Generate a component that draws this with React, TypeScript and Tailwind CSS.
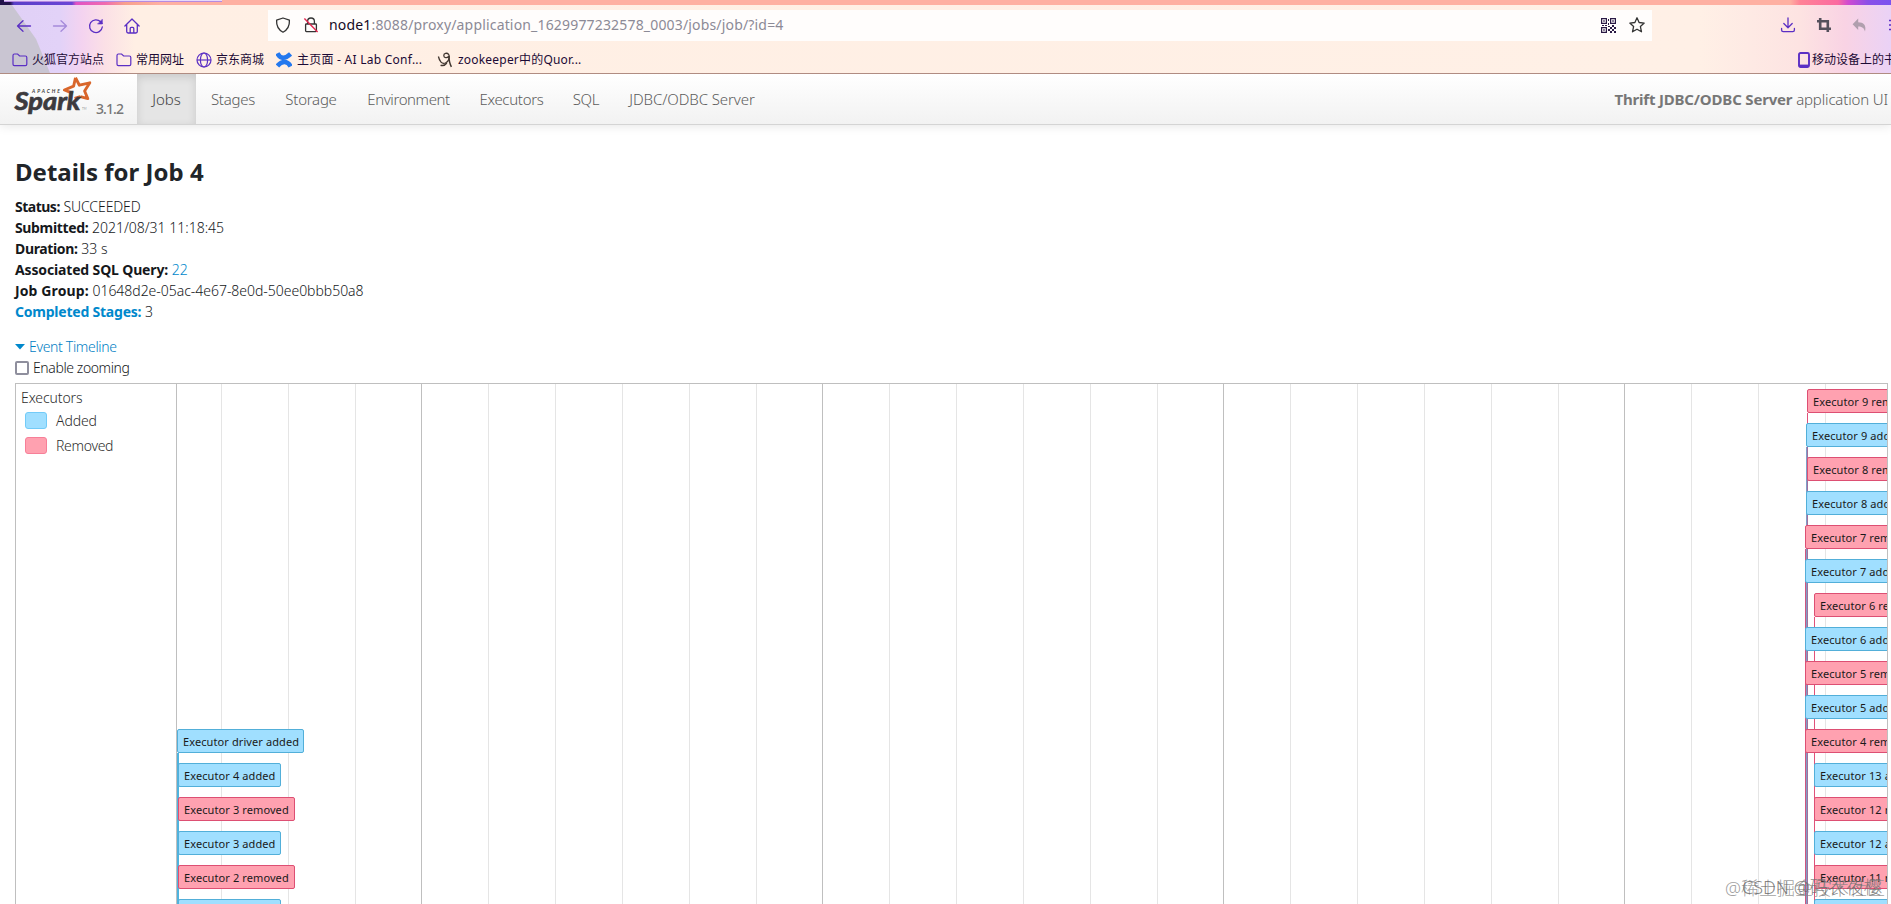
const navLinks = [
    { name: "Stages", box: "w-[74px]", text: "tracking-[-0.25px]" },
    { name: "Storage", box: "w-[82px]", text: "tracking-[-0.25px]" },
    { name: "Environment", box: "w-[113px]", text: "tracking-[-0.4px]" },
    { name: "Executors", box: "w-[93px]", text: "tracking-[-0.3px]" },
    { name: "SQL", box: "w-[56px]", text: "tracking-[-0.3px]" },
    { name: "JDBC/ODBC Server", box: "w-[156px]", text: "tracking-[-0.1px]" },
];

// grid lines start 44px right of the label column, one every 66.83px
const gridLines = Array.from({ length: 25 }, (_, i) => i);

// [row, kind, label, left, width]
const items: any[] = [
    [0, "removed", "Executor 9 removed", 1630, 117],
    [1, "added", "Executor 9 added", 1629, 103],
    [2, "removed", "Executor 8 removed", 1630, 117],
    [3, "added", "Executor 8 added", 1629, 103],
    [4, "removed", "Executor 7 removed", 1628, 117],
    [5, "added", "Executor 7 added", 1628, 103],
    [6, "removed", "Executor 6 removed", 1637, 117],
    [7, "added", "Executor 6 added", 1628, 103],
    [8, "removed", "Executor 5 removed", 1628, 117],
    [9, "added", "Executor 5 added", 1628, 103],
    [10, "removed", "Executor 4 removed", 1628, 117],
    [11, "added", "Executor 13 added", 1637, 110],
    [12, "removed", "Executor 12 removed", 1637, 124],
    [13, "added", "Executor 12 added", 1637, 110],
    [14, "removed", "Executor 11 removed", 1637, 124],
    [15, "added", "Executor 11 added", 1637, 110],
    [10, "added", "Executor driver added", 0, 127],
    [11, "added", "Executor 4 added", 1, 103],
    [12, "removed", "Executor 3 removed", 1, 117],
    [13, "added", "Executor 3 added", 1, 103],
    [14, "removed", "Executor 2 removed", 1, 117],
    [15, "added", "Executor 2 added", 1, 103],
];

const Folder = () => (
    <svg className="w-[16px] h-[14px] shrink-0" viewBox="0 0 16 14" fill="none" stroke="#5b2fc4" strokeWidth="1.2">
        <path d="M1 11.2V2.4Q1 1 2.4 1H5.6L7.6 3H13.4Q14.8 3 14.8 4.4V11.2Q14.8 12.6 13.4 12.6H2.4Q1 12.6 1 11.2Z" />
    </svg>
)

const Toolbar = () => {
    return ( <div className="h-[45px] flex items-start relative">
        <div className="w-[268px] h-[41px] flex items-center pl-[16px] gap-[20px]">
            <svg className="w-4 h-4" viewBox="0 0 16 16" fill="none" stroke="#5b2fc4" strokeWidth="1.3" strokeLinecap="round" strokeLinejoin="round"><path d="M14.5 8H1.5M7 2.7L1.5 8L7 13.3" /></svg>
            <svg className="w-4 h-4" viewBox="0 0 16 16" fill="none" stroke="#a58ada" strokeWidth="1.3" strokeLinecap="round" strokeLinejoin="round"><path d="M1.5 8H14.5M9 2.7L14.5 8L9 13.3" /></svg>
            <svg className="w-4 h-4" viewBox="0 0 16 16" fill="none" stroke="#5b2fc4" strokeWidth="1.3" strokeLinecap="round" strokeLinejoin="round"><path d="M14.3 9A6.4 6.4 0 1 1 12.6 3.8L14 5.4" /><path d="M14.3 1.6V6H9.9Z" fill="#5b2fc4" strokeWidth="0.6" /></svg>
            <svg className="w-4 h-4" viewBox="0 0 16 16" fill="none" stroke="#5b2fc4" strokeWidth="1.3" strokeLinecap="round" strokeLinejoin="round"><path d="M0.9 8L8 1L15.1 8M2.7 6.6V13.6Q2.7 15 4.1 15H11.9Q13.3 15 13.3 13.6V6.6M6.2 15V10.4Q6.2 9.4 7.2 9.4H8.8Q9.8 9.4 9.8 10.4V15" /></svg>
        </div>
        <div className="w-[1384px] h-[31px] mt-[5px] bg-[#fffdfc] flex items-center pl-[7px] pr-[7px] pb-px">
            <svg className="w-4 h-4" viewBox="0 0 16 16" fill="none" stroke="#333" strokeWidth="1.3" strokeLinejoin="round"><path d="M8 1L14.4 3.2Q14.9 11.4 8 15.2Q1.1 11.4 1.6 3.2Z" /></svg>
            <svg className="w-4 h-4 ml-[12px]" viewBox="0 0 16 16" fill="none" stroke="#333" strokeWidth="1.3"><path d="M4.6 7V4.4A3.4 3.4 0 0 1 11.4 4.4V7M3.4 7H12.6Q13.4 7 13.4 7.8V13.8Q13.4 14.6 12.6 14.6H3.4Q2.6 14.6 2.6 13.8V7.8Q2.6 7 3.4 7Z" /><path d="M1.4 1.4L14.6 15" stroke="#e22850" strokeWidth="1.4" /></svg>
            <p className="ml-[10px] -mt-px text-[14px] leading-[20px] tracking-[0.17px] text-[#8c8a96] whitespace-nowrap"><span className="text-[#15091f]">node1</span>:8088/proxy/application_1629977232578_0003/jobs/job/?id=4</p>
            <svg className="w-[15px] h-[15px] ml-auto" viewBox="0 0 15 15" fill="#2a1a45">
                <path fillRule="evenodd" d="M0 0H6V6H0ZM1.2 1.2V4.8H4.8V1.2ZM9 0H15V6H9ZM10.2 1.2V4.8H13.8V1.2ZM0 9H6V15H0ZM1.2 10.2V13.8H4.8V10.2Z" />
                <path d="M2.3 2.3H3.7V3.7H2.3ZM11.3 2.3H12.7V3.7H11.3ZM2.3 11.3H3.7V12.7H2.3ZM7 1H8V3H7ZM7 5H8V7H7ZM1 7H3V8H1ZM4 7H6V8H4ZM7 8H9V9H7ZM9 9H11V11H9ZM11 7H13V9H11ZM13 9H15V11H13ZM11 11H13V13H11ZM9 13H11V15H9ZM13 13H15V15H13ZM7 11H9V13H7Z" />
            </svg>
            <svg className="w-4 h-4 ml-[13px]" viewBox="0 0 16 16" fill="none" stroke="#333" strokeWidth="1.3" strokeLinejoin="round"><path d="M8 0.8L10.1 5.5L15.2 6.1L11.4 9.6L12.5 14.8L8 12.2L3.5 14.8L4.6 9.6L0.8 6.1L5.9 5.5Z" /></svg>
        </div>
        <div className="w-[239px] h-[40px] flex items-center pl-[128px] overflow-hidden">
            <svg className="w-4 h-4 shrink-0" viewBox="0 0 16 16" fill="none" stroke="#5b2fc4" strokeWidth="1.3" strokeLinecap="round" strokeLinejoin="round"><path d="M8 1V10.5M3.8 6.5L8 10.7L12.2 6.5M1.6 11.5V13Q1.6 14.6 3.2 14.6H12.8Q14.4 14.6 14.4 13V11.5" /></svg>
            <svg className="w-4 h-4 shrink-0 ml-[20px]" viewBox="0 0 16 16" fill="none" stroke="#55505c" strokeWidth="2.6"><path d="M4.2 1V11.8H15M1 4.2H11.8V15" /></svg>
            <svg className="w-4 h-4 shrink-0 ml-[20px]" viewBox="0 0 16 16" fill="#b09fae"><path d="M6.2 1.6V5.2C11.5 5.2 14.6 8 13 14.6C12 11 10 9.6 6.2 9.6V13L0.6 7.3Z" /></svg>
            <svg className="w-4 h-4 shrink-0 ml-[20px]" viewBox="0 0 16 16" stroke="#5b2fc4" strokeWidth="1.3"><path d="M1 3.5H15M1 8H15M1 12.5H15" /></svg>
        </div>
    </div> );
}

const Bookmarks = () => {
    return ( <div className="h-[23px] -mt-[2px] flex items-center text-[12px] leading-[18px] text-[#1c0a35] whitespace-nowrap overflow-hidden relative">
        <div className="w-[104px] pl-[12px] flex items-center gap-[4px]"><Folder /><span>火狐官方站点</span></div>
        <div className="w-[80px] pl-[12px] flex items-center gap-[4px]"><Folder /><span>常用网址</span></div>
        <div className="w-[80px] pl-[12px] flex items-center gap-[4px]">
            <svg className="w-4 h-4 shrink-0" viewBox="0 0 16 16" fill="none" stroke="#5b2fc4" strokeWidth="1.2"><circle cx="8" cy="8" r="7" /><ellipse cx="8" cy="8" rx="3.6" ry="7" /><path d="M1 8H15" /></svg>
            <span>京东商城</span>
        </div>
        <div className="w-[161px] pl-[12px] flex items-center gap-[5px]">
            <svg className="w-4 h-4 shrink-0" viewBox="0 0 16 16" fill="none" stroke="#2478ee" strokeWidth="4.6"><path d="M1.4 1.4C4.6 7.6 9.5 6.8 14.6 2" /><path d="M1.4 14C6 8.6 11.4 8.6 14.6 14.4" /></svg>
            <span className="tracking-[0.25px]">主页面 - AI Lab Conf...</span>
        </div>
        <div className="pl-[12px] flex items-center gap-[5px]">
            <svg className="w-4 h-4 shrink-0" viewBox="0 0 16 16" fill="none" stroke="#40352f" strokeWidth="1.3"><path d="M1.4 4.5C2.6 9.5 4.8 12.4 8.4 11C12 9.4 13.4 4.8 11.6 2.4C10 0.4 6.6 1.2 6.8 3.8C7 6 10 6.4 11.6 4.4" /><path d="M11.8 4C12 8 12.8 12 14.4 14.8M3.6 13.2Q7 14.6 9.8 11" strokeWidth="1.5" /></svg>
            <span className="tracking-[0.2px]">zookeeper中的Quor...</span>
        </div>
        <div className="ml-auto w-[93px] shrink-0 overflow-hidden flex items-center gap-[2px]">
            <svg className="w-[12px] h-4 shrink-0" viewBox="0 0 12 16" fill="none" stroke="#5b2fc4" strokeWidth="1.9"><rect x="1" y="1" width="10" height="14" rx="1.5" /><path d="M1 13.8H11" strokeWidth="2.4" /></svg>
            <span>移动设备上的书签</span>
        </div>
    </div> );
}

const Navbar = () => {
    return ( <div className="h-[51px] flex items-center border-b border-[#d4d4d4] bg-linear-to-b from-white to-[#f2f2f2] shadow-[0_1px_10px_rgba(0,0,0,0.1)] text-[15px] text-[#5c5c5c] font-light">
        <div className="w-[137px] h-[50px] flex pl-[12px]">
            <svg className="w-[82px] h-[50px]" viewBox="12 74 82 50">
                <path d="M75.5 77.8L79.4 85.2L89.8 82.8L84.6 91L87.8 98.6L80.4 96.6M72.8 93.4L64.4 90L73.6 86.2L75.5 77.8M74.6 98.4L80.4 96.6" fill="none" stroke="#d9662b" strokeWidth="2.9" strokeLinejoin="round" />
                <text x="32" y="93.4" fontSize="5" fontWeight="700" fontStyle="italic" fontFamily="Lato" fill="#3c3c3c" textLength="28">APACHE</text>
                <text x="14.5" y="110.3" fontSize="25" fontWeight="700" fontStyle="italic" fontFamily="Lato" fill="#3c3a3e" stroke="#3c3a3e" strokeWidth="0.7" textLength="66" lengthAdjust="spacingAndGlyphs">Spark</text>
                <text x="82" y="110.3" fontSize="3" fill="#555" fontFamily="Lato">TM</text>
            </svg>
            <span className="pl-[2px] pt-[25px] text-[14px] leading-[20px] tracking-[-0.9px] font-medium text-[#777]">3.1.2</span>
        </div>
        <div className="w-[59px] h-[50px] flex items-center justify-center bg-[#e5e5e5] text-[#444] shadow-[inset_0_3px_8px_rgba(0,0,0,0.125)] tracking-[-0.1px]">Jobs</div>
        <div className="flex whitespace-nowrap">
            {navLinks.map((l) => (
                <a key={l.name} className={"flex justify-center " + l.box}><span className={l.text}>{l.name}</span></a>
            ))}
        </div>
        <p className="ml-auto pr-[3px] whitespace-nowrap tracking-[-0.15px]"><b className="font-bold tracking-[-0.18px] text-[#777]">Thrift JDBC/ODBC Server</b> application UI</p>
    </div> );
}

const Timeline = () => {
    return ( <div className="ml-[15px] w-[1873px] h-[521px] flex border border-b-0 border-[#bfbfbf] overflow-hidden">
        <div className="w-[161px] shrink-0 border-r border-[#bfbfbf] text-[#2d2d2d] pl-[5px] pt-[3px] font-light tracking-[-0.1px]">
            <div className="leading-[21px]">Executors</div>
            <div className="flex items-center h-[25px] pl-[4px] gap-[9px]"><span className="w-[22px] h-[17px] rounded-[3px] border border-[#72cbf8] bg-[#a0dfff]"></span>Added</div>
            <div className="flex items-center h-[25px] pl-[4px] gap-[9px] tracking-[-0.3px]"><span className="w-[22px] h-[17px] rounded-[3px] border border-[#f77f98] bg-[#ffa1b0]"></span>Removed</div>
        </div>
        <div className="relative grow overflow-hidden">
            {gridLines.map((i) => (
                <i key={i} className={"absolute top-0 h-full w-px " + (i % 6 === 3 ? "bg-[#bfbfbf]" : "bg-[#e5e5e5]")} style={{ left: Math.round(44 + i * 66.83) }}></i>
            ))}
            {/* stems running down from the boxes to the axis */}
            <i className="absolute left-0 top-[369px] h-[160px] w-[2px] bg-[#4fb3de]"></i>
            <i className="absolute left-[1630px] top-[29px] h-[120px] w-px bg-[#e0527a]"></i>
            <i className="absolute left-[1629px] top-[63px] h-[460px] w-px bg-[#7f9fc8]"></i>
            <i className="absolute left-[1630px] top-[63px] h-[460px] w-px bg-[#a0709f]"></i>
            <i className="absolute left-[1628px] top-[165px] h-[360px] w-px bg-[#d0567f]"></i>
            <i className="absolute left-[1637px] top-[233px] h-[300px] w-px bg-[#e0527a]"></i>
            {items.map(([row, kind, label, left, width]) => (
                <div key={label} className={"absolute h-[24px] px-[5px] border rounded-[2px] text-[11px] leading-[23px] tracking-[0.1px] text-[#1a1a1a] whitespace-nowrap " + (kind === "added" ? "bg-[#a0dfff] border-[#52afd9]" : "bg-[#ffa1b0] border-[#dd4f73]")} style={{ left, width, top: 5 + row * 34 }}>{label}</div>
            ))}
        </div>
    </div> );
}

const App = () => {
    return ( <div className="relative w-[1891px] h-[904px] overflow-hidden bg-white text-[14px] leading-[21px] text-[#15181b] font-['Noto_Sans','Noto_Sans_CJK_SC',sans-serif]">
        <div className="relative h-[74px] border-b border-[#b08c82] bg-[linear-gradient(to_right,#e0d0f6_0px,#e2d2f8_60px,#f4d3f0_82px,#fbe0e6_105px,#ffefe4_135px,#fff0e6_1700px,#fde3e2_1800px,#f9d3e4_1845px,#ead2f6_1891px)]">
            <div className="absolute left-0 top-[5px] w-[52px] h-[68px] bg-[#c9c5d2] [clip-path:polygon(0_0,12px_0,36px_34px,50px_68px,0_68px)]"></div>
            <div className="relative h-[5px] bg-[linear-gradient(to_right,#22124a_0px,#22124a_10px,#5a3fc8_14px,#6a45d6_72px,#e052c4_76px,#f06ab0_105px,#f8a08c_125px,#feb0a2_160px,#feb0a2_1790px,#ff8296_1800px,#fb6aa0_1838px,#d14bd0_1848px,#8a50e8_1868px,#7a52f0_1891px)]">
                <div className="ml-[4px] w-[218px] h-[2px] bg-[#e8d9fb] border-b border-[#b58be0]"></div>
            </div>
            <Toolbar />
            <Bookmarks />
        </div>
        <Navbar />
        <div className="pl-[15px] pt-[29px]">
            <h3 className="text-2xl leading-[36px] font-bold text-[#212529]">Details for Job 4</h3>
            <ul className="pt-[6px] font-light [&_b]:font-bold">
                <li><b className="tracking-[-0.5px]">Status:</b> <span className="tracking-[-0.1px]">SUCCEEDED</span></li>
                <li><b className="tracking-[-0.35px]">Submitted:</b> 2021/08/31 11:18:45</li>
                <li><b className="tracking-[-0.35px]">Duration:</b> 33 s</li>
                <li><b className="tracking-[-0.15px]">Associated SQL Query:</b> <a className="text-[#0088cc]">22</a></li>
                <li><b className="tracking-[0.12px]">Job Group:</b> <span className="tracking-[-0.03px]">01648d2e-05ac-4e67-8e0d-50ee0bbb50a8</span></li>
                <li><a className="text-[#0088cc]"><b className="tracking-[-0.22px]">Completed Stages:</b></a> 3</li>
            </ul>
            <div className="pt-[14px] flex items-center text-[#0080c4] font-light tracking-[-0.33px]">
                <svg className="w-[10px] h-[6px] mr-[4px]" viewBox="0 0 10 6" fill="#0088cc"><path d="M0 0H10L5 5.6Z" /></svg>
                Event Timeline
            </div>
            <div className="flex items-center h-[21px] font-light tracking-[-0.4px]"><span className="w-[14px] h-[14px] mr-[4px] border-2 border-[#8f8f9d] rounded-[2px] bg-white"></span>Enable zooming</div>
        </div>
        <div className="h-[5px]"></div>
        <Timeline />
        <p className="absolute left-[1725px] top-[874px] text-[18px] leading-[28px] font-light text-[#888]/80 whitespace-nowrap">@稀土掘金技术社区</p>
        <p className="absolute left-[1742px] top-[873px] text-[18px] leading-[28px] font-light text-[#666]/80 whitespace-nowrap">CSDN @码农夜樱</p>
    </div> );
}

export default App;
